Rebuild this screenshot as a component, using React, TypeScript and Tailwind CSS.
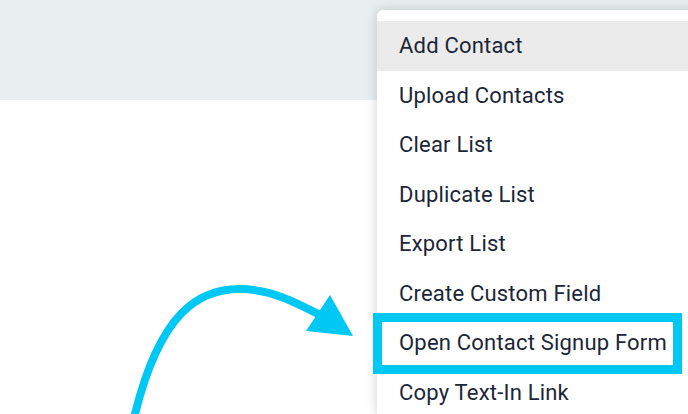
import React from "react";

const items = [
  "Add Contact",
  "Upload Contacts",
  "Clear List",
  "Duplicate List",
  "Export List",
  "Create Custom Field",
  "Open Contact Signup Form",
  "Copy Text-In Link",
];

const App = () => {
  return (
    <div
      className="relative w-[688px] h-[414px] overflow-hidden bg-white"
      style={{ fontFamily: "Roboto, 'Liberation Sans', sans-serif" }}
    >
      <div className="h-[100px] bg-[#e9eef1]" />

      {/* dropdown menu */}
      <div className="absolute left-[377px] top-[10px] w-[340px] rounded-md bg-white pt-[11px] shadow-[0_0_12px_rgba(0,0,0,0.18)]">
        {items.map((item, i) => (
          <div
            key={item}
            className={`h-[49.5px] flex items-center pl-[22px] text-[22px] tracking-[0.2px] text-[#1b2638] ${
              i === 0 ? "bg-[#ebebeb]" : ""
            }`}
          >
            {item}
          </div>
        ))}
      </div>

      {/* highlight box */}
      <div className="absolute left-[373px] top-[313px] w-[309px] h-[61px] border-[9px] border-[#00c8f5]" />

      {/* arrow */}
      <svg className="absolute inset-0" width="688" height="414" viewBox="0 0 688 414">
        <path
          d="M134 418 C 160 310, 200 289, 240 289 C 270 289, 295 302, 322 316"
          fill="none"
          stroke="#00c8f5"
          strokeWidth="8"
        />
        <polygon points="330,295 306,331 353,336" fill="#00c8f5" />
      </svg>
    </div>
  );
};

export default App;
